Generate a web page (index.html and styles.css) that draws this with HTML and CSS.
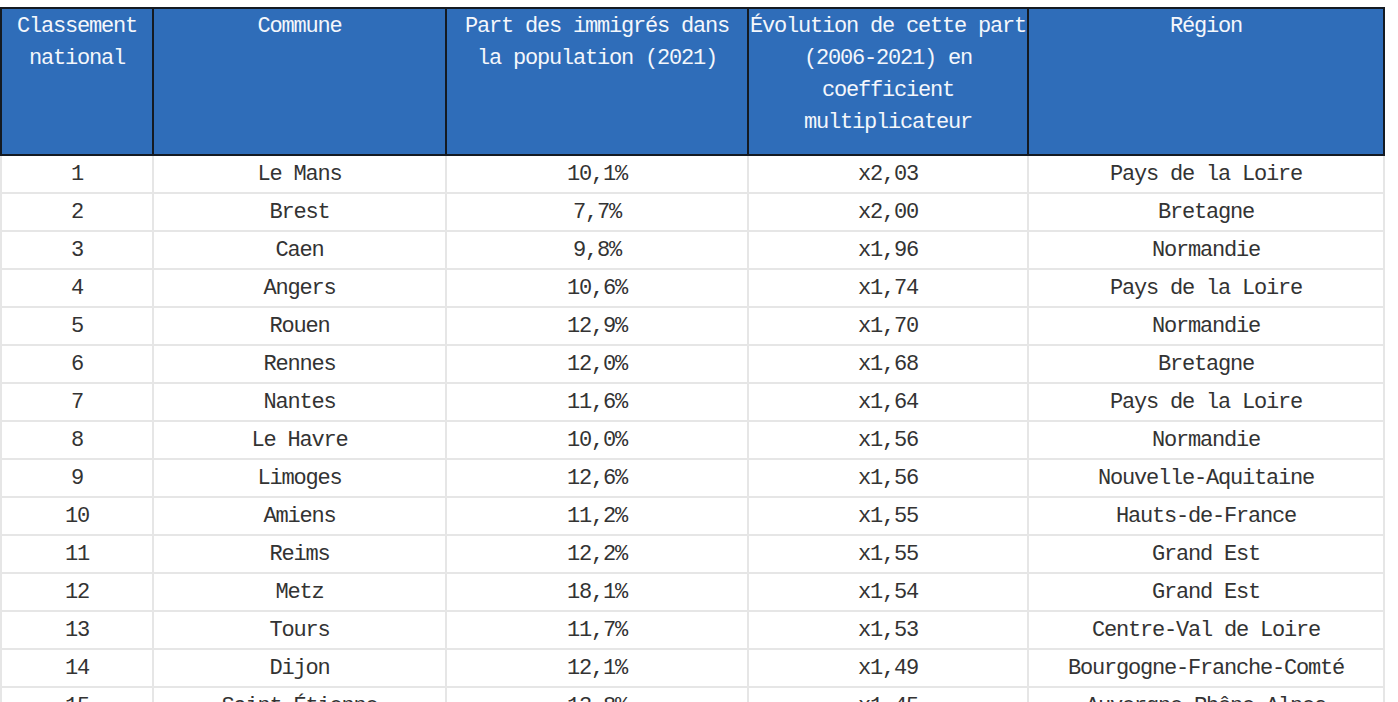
FILE: index.html
```html
<!DOCTYPE html>
<html lang="fr">
<head>
<meta charset="utf-8">
<title>Classement</title>
<link rel="stylesheet" href="styles.css">
</head>
<body>
<table class="tbl">
  <colgroup>
    <col class="c1"><col class="c2"><col class="c3"><col class="c4"><col class="c5">
  </colgroup>
  <thead>
    <tr>
      <th>Classement<br>national</th>
      <th>Commune</th>
      <th>Part des immigrés dans<br>la population (2021)</th>
      <th>Évolution de cette part<br>(2006-2021) en<br>coefficient<br>multiplicateur</th>
      <th>Région</th>
    </tr>
  </thead>
  <tbody>
    <tr><td>1</td><td>Le Mans</td><td>10,1%</td><td>x2,03</td><td>Pays de la Loire</td></tr>
    <tr><td>2</td><td>Brest</td><td>7,7%</td><td>x2,00</td><td>Bretagne</td></tr>
    <tr><td>3</td><td>Caen</td><td>9,8%</td><td>x1,96</td><td>Normandie</td></tr>
    <tr><td>4</td><td>Angers</td><td>10,6%</td><td>x1,74</td><td>Pays de la Loire</td></tr>
    <tr><td>5</td><td>Rouen</td><td>12,9%</td><td>x1,70</td><td>Normandie</td></tr>
    <tr><td>6</td><td>Rennes</td><td>12,0%</td><td>x1,68</td><td>Bretagne</td></tr>
    <tr><td>7</td><td>Nantes</td><td>11,6%</td><td>x1,64</td><td>Pays de la Loire</td></tr>
    <tr><td>8</td><td>Le Havre</td><td>10,0%</td><td>x1,56</td><td>Normandie</td></tr>
    <tr><td>9</td><td>Limoges</td><td>12,6%</td><td>x1,56</td><td>Nouvelle-Aquitaine</td></tr>
    <tr><td>10</td><td>Amiens</td><td>11,2%</td><td>x1,55</td><td>Hauts-de-France</td></tr>
    <tr><td>11</td><td>Reims</td><td>12,2%</td><td>x1,55</td><td>Grand Est</td></tr>
    <tr><td>12</td><td>Metz</td><td>18,1%</td><td>x1,54</td><td>Grand Est</td></tr>
    <tr><td>13</td><td>Tours</td><td>11,7%</td><td>x1,53</td><td>Centre-Val de Loire</td></tr>
    <tr><td>14</td><td>Dijon</td><td>12,1%</td><td>x1,49</td><td>Bourgogne-Franche-Comté</td></tr>
    <tr><td>15</td><td>Saint-Étienne</td><td>13,8%</td><td>x1,45</td><td>Auvergne-Rhône-Alpes</td></tr>
  </tbody>
</table>
</body>
</html>
```
FILE: styles.css
```css
html, body {
  margin: 0;
  padding: 0;
  background: #ffffff;
}
body {
  padding-top: 7px;
  font-family: "Liberation Mono", "DejaVu Sans Mono", monospace;
  overflow: hidden;
}
.tbl {
  border-collapse: collapse;
  table-layout: fixed;
  width: 1383px;
  font-size: 22px;
  letter-spacing: -1.2px;
}
.c1 { width: 152px; }
.c2 { width: 293px; }
.c3 { width: 302px; }
.c4 { width: 280px; }
.c5 { width: 356px; }
.tbl th {
  background: #2f6db9;
  color: #f4f7fc;
  font-weight: normal;
  vertical-align: top;
  text-align: center;
  white-space: nowrap;
  line-height: 32px;
  height: 143px;
  padding: 2px 0 0;
  border: 2px solid #141a22;
}
.tbl td {
  color: #333333;
  text-align: center;
  vertical-align: middle;
  height: 34px;
  padding: 2px 0 0;
  line-height: 24px;
  border: 2px solid #e6e6e6;
  white-space: nowrap;
}
.tbl tbody tr:first-child td {
  border-top: 2px solid #141a22;
}
```
